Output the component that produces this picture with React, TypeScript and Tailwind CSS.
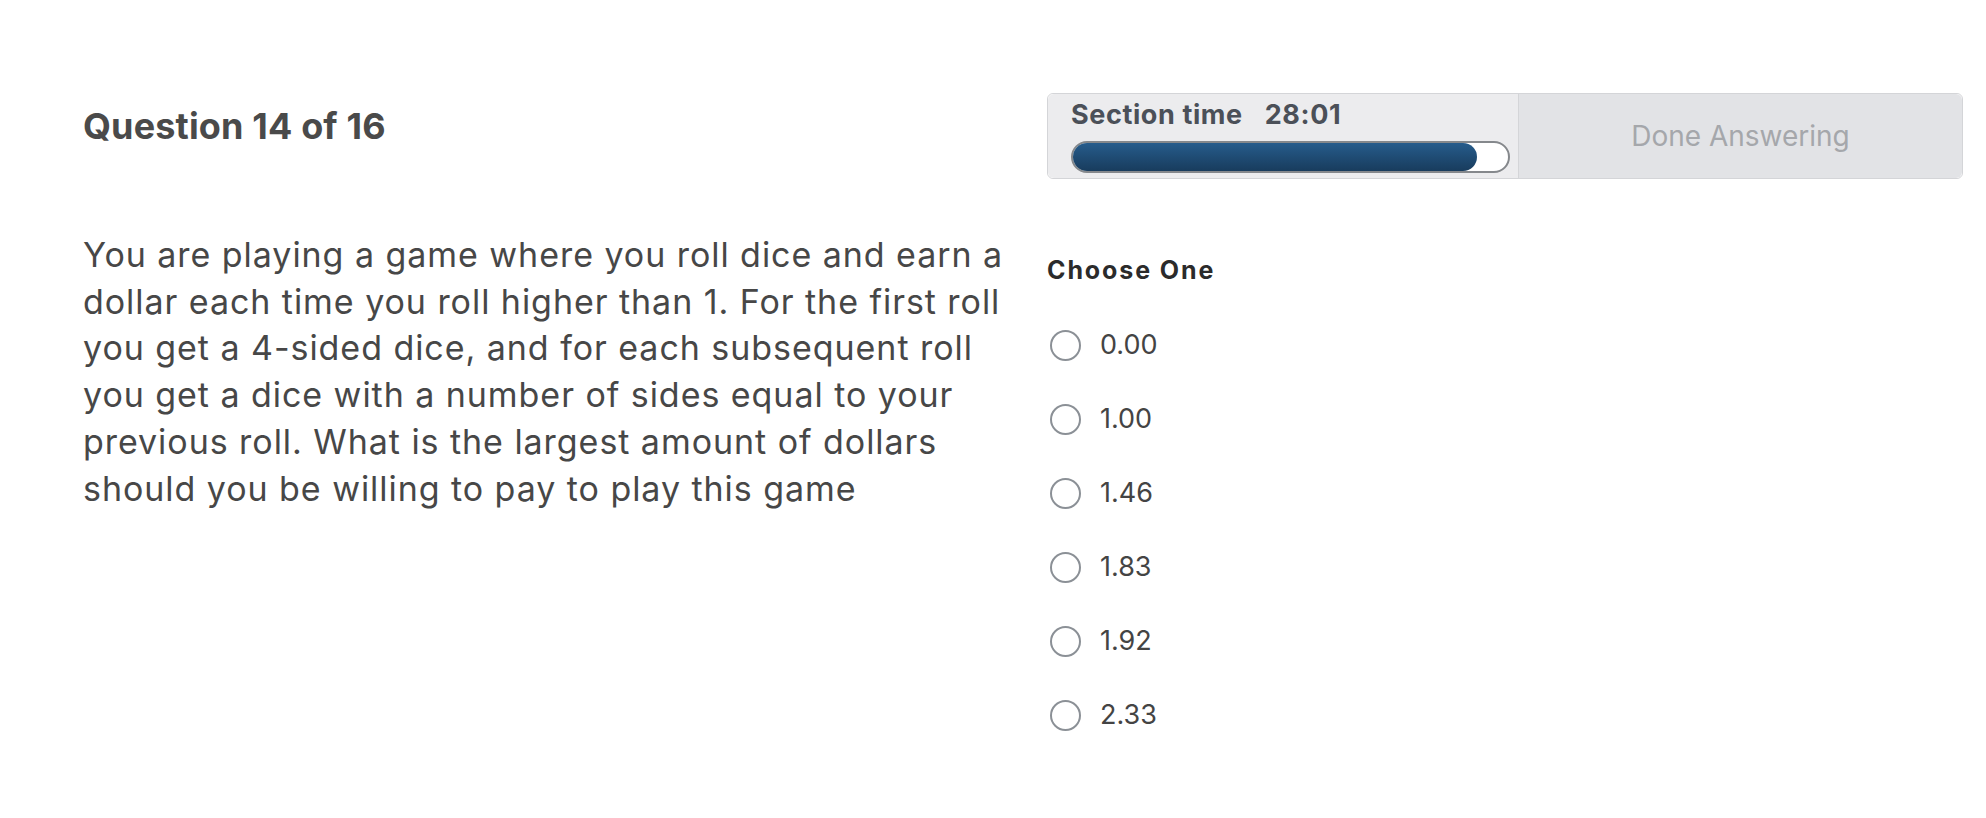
const options = ['0.00', '1.00', '1.46', '1.83', '1.92', '2.33'];

export default function App() {
  return (
    <div
      className="min-h-screen bg-white"
      style={{ fontFamily: 'Inter, "Noto Sans", sans-serif' }}
    >
      <div className="flex pl-[83px] pr-[23px] pt-[93px]">
        {/* Question column */}
        <div className="w-[930px] shrink-0">
          <h1 className="mt-[11px] text-[36px] font-bold leading-[44px] tracking-[0.15px] text-[#4a4a4a]">
            Question 14 of 16
          </h1>
          <p className="mt-[84px] text-[34px] leading-[46.7px] tracking-[0.95px] text-[#474747]">
            You are playing a game where you roll dice and earn a dollar each time you roll
            higher than 1. For the first roll you get a 4-sided dice, and for each subsequent
            roll you get a dice with a number of sides equal to your previous roll. What is the
            largest amount of dollars should you be willing to pay to play this game
          </p>
        </div>

        {/* Answer column */}
        <div className="ml-[34px] flex-1">
          <div className="flex h-[86px] rounded-[6px] border border-[#d4d5d8]">
            <div className="flex w-[470px] flex-col rounded-l-[6px] bg-[#ececee] pl-[23px] pr-[8px] pt-[5px]">
              <div className="text-[27px] font-bold leading-[32px] tracking-[0.6px] text-[#4b5058]">
                Section time<span className="ml-[22px]">28:01</span>
              </div>
              <div className="mt-[10px] h-[32px] rounded-full border-2 border-[#85888c] bg-white">
                <div className="h-full w-[92.8%] rounded-full bg-gradient-to-b from-[#265c8c] to-[#183c5d]" />
              </div>
            </div>
            <button className="flex flex-1 items-center justify-center rounded-r-[6px] border-l border-[#d4d5d8] bg-[#e2e3e6] text-[28px] text-[#a5a7ab]">
              Done Answering
            </button>
          </div>

          <div className="mt-[75px] text-[25px] font-bold leading-[32px] tracking-[1.9px] text-[#2b2b2b]">
            Choose One
          </div>

          <div className="mt-[22px] flex flex-col">
            {options.map((o) => (
              <label key={o} className="flex h-[74px] items-center">
                <span className="ml-[3px] h-[31px] w-[31px] rounded-full border-2 border-[#8b9096] bg-white" />
                <span className="ml-[19px] text-[27px] text-[#444444]">{o}</span>
              </label>
            ))}
          </div>
        </div>
      </div>
    </div>
  );
}
